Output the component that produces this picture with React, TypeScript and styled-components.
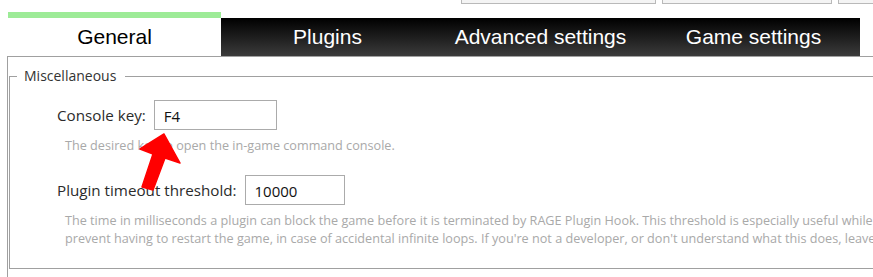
import styled, { createGlobalStyle } from "styled-components"

const Global = createGlobalStyle`
  html, body {
    margin: 0;
    padding: 0;
    background: #ffffff;
  }
`

const Root = styled.div`
  position: relative;
  width: 873px;
  height: 277px;
  overflow: hidden;
  background: #fff;
  font-family: "Open Sans", "Noto Sans", sans-serif;
`

const TopBar = styled.div`
  display: flex;
  align-items: flex-end;
  gap: 6px;
  height: 4px;
  padding-left: 461px;
  overflow: hidden;
`
const TopButton = styled.div<{ $w: number }>`
  flex: none;
  width: ${(p) => p.$w}px;
  height: 30px;
  box-sizing: border-box;
  background: #f4f4f4;
  border: 1px solid #b9b9b9;
`

const Accent = styled.div`
  margin: 8px 0 0 8px;
  width: 213px;
  height: 6px;
  background: #9deb97;
`

const TabStrip = styled.div`
  display: flex;
  margin-left: 8px;
  width: 852px;
  height: 38px;
  background: linear-gradient(#000000, #3b3b3b);
`
const Tab = styled.div<{ $active?: boolean }>`
  flex: 1;
  display: flex;
  align-items: center;
  justify-content: center;
  font-family: "Liberation Sans", Arial, sans-serif;
  font-size: 21px;
  color: ${(p) => (p.$active ? "#000" : "#fff")};
  background: ${(p) => (p.$active ? "#fff" : "transparent")};
`

const Panel = styled.div`
  margin-left: 7px;
  border-top: 1px solid #a0a0a0;
  border-left: 1px solid #a0a0a0;
  height: 240px;
`

const Group = styled.fieldset`
  margin: 9px 0 0 1px;
  padding: 0;
  width: 1000px;
  border: 1px solid #a0a0a0;
  min-width: 0;
`
const Legend = styled.legend`
  margin-left: 7px;
  padding: 0 9px 2px 7px;
  font-size: 14px;
  line-height: 19px;
  color: #333;
`

const GroupBody = styled.div`
  display: flex;
  flex-direction: column;
  padding: 13px 0 21px 47px;
`

const Row = styled.div<{ $top?: number }>`
  display: flex;
  align-items: center;
  gap: 8px;
  margin-top: ${(p) => p.$top ?? 0}px;
`
const Label = styled.span`
  font-size: 15.2px;
  color: #2b2b2b;
`
const Field = styled.div<{ $w: number }>`
  box-sizing: border-box;
  width: ${(p) => p.$w}px;
  height: 30px;
  padding: 5px 0 0 9px;
  border: 1px solid #ababab;
  font-size: 15px;
  color: #111;
`
const Hint = styled.div`
  margin: 6px 0 0 8px;
  font-size: 12.65px;
  line-height: 18px;
  color: #a9a9a9;
  white-space: nowrap;
`

const Arrow = styled.svg`
  position: absolute;
  left: 0;
  top: 0;
  pointer-events: none;
`

export default function App() {
  return (
    <Root>
      <Global />
      <TopBar>
        <TopButton $w={195} />
        <TopButton $w={170} />
        <TopButton $w={60} />
      </TopBar>
      <Accent />
      <TabStrip>
        <Tab $active>General</Tab>
        <Tab>Plugins</Tab>
        <Tab>Advanced settings</Tab>
        <Tab>Game settings</Tab>
      </TabStrip>
      <Panel>
        <Group>
          <Legend>Miscellaneous</Legend>
          <GroupBody>
            <Row>
              <Label>Console key:</Label>
              <Field $w={123}>F4</Field>
            </Row>
            <Hint>The desired key to open the in-game command console.</Hint>
            <Row $top={21}>
              <Label>Plugin timeout threshold:</Label>
              <Field $w={100}>10000</Field>
            </Row>
            <Hint>
              The time in milliseconds a plugin can block the game before it is terminated by RAGE Plugin Hook. This threshold is especially useful while
              <br />
              prevent having to restart the game, in case of accidental infinite loops. If you're not a developer, or don't understand what this does, leave
            </Hint>
          </GroupBody>
        </Group>
      </Panel>
      <Arrow width="873" height="277" viewBox="0 0 873 277">
        <polygon
          points="164,134 180,163 165,158 153,190 142,187 153,154 140,149"
          fill="#ff0000"
          stroke="#ff0000"
          strokeWidth="1.5"
          strokeLinejoin="round"
        />
      </Arrow>
    </Root>
  )
}
